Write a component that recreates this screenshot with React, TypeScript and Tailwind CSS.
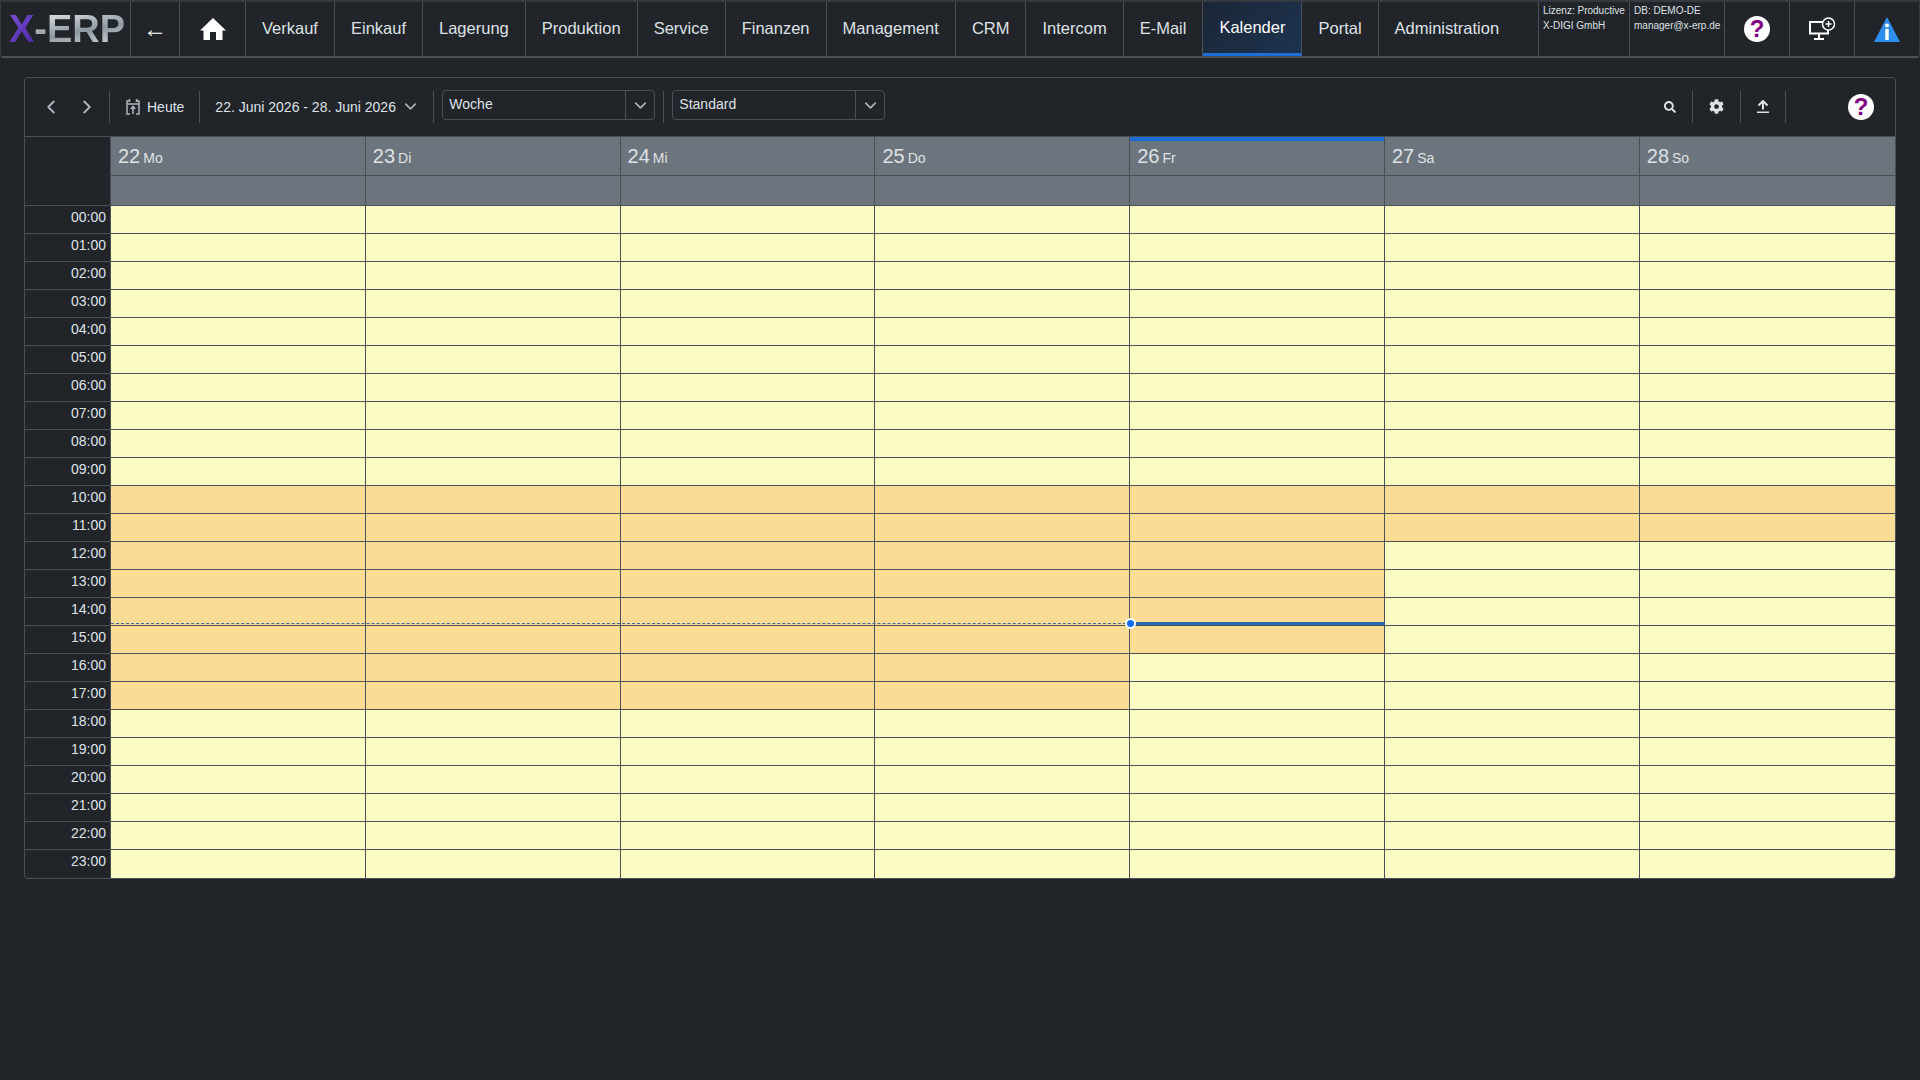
import { ChevronDown, ChevronLeft, ChevronRight } from "lucide-react";
import { FaCog, FaSearch } from "react-icons/fa";

const menuItems = ["Verkauf", "Einkauf", "Lagerung", "Produktion", "Service", "Finanzen", "Management", "CRM", "Intercom", "E-Mail"];

const days = [
  { num: 22, name: "Mo", from: 10, to: 17 },
  { num: 23, name: "Di", from: 10, to: 17 },
  { num: 24, name: "Mi", from: 10, to: 17 },
  { num: 25, name: "Do", from: 10, to: 17 },
  { num: 26, name: "Fr", from: 10, to: 15, today: true },
  { num: 27, name: "Sa", from: 10, to: 11 },
  { num: 28, name: "So", from: 10, to: 11 },
];

const hours = Array.from({ length: 24 }, (_, i) => i);

const pad = (n: number) => String(n).padStart(2, "0");

const HelpBadge = () => (
  <span className="flex h-[26px] w-[26px] items-center justify-center rounded-full bg-white text-[24px] font-bold leading-none text-[#800080]">
    ?
  </span>
);

const HomeIcon = () => (
  <svg width="26" height="24" viewBox="0 0 26 24" fill="#fff">
    <path d="M13 1 L26 13.5 H22.5 V23 H16 V15 H10 V23 H3.5 V13.5 H0 Z" />
  </svg>
);

const MonitorPlusIcon = () => (
  <svg width="28" height="24" viewBox="0 0 28 24" fill="none" stroke="#fff">
    <path d="M17 5 H2 V16.5 H20 V12" strokeWidth="2" />
    <path d="M11 17 V21 M6 22 H16" strokeWidth="2" />
    <circle cx="20.5" cy="7" r="6" strokeWidth="1.5" fill="#212529" />
    <path d="M17.5 7 H23.5 M20.5 4 V10" strokeWidth="1.5" />
  </svg>
);

const InfoTriangle = () => (
  <svg width="26" height="25" viewBox="0 0 26 25">
    <path d="M13 0 L26 25 H0 Z" fill="#2f8fef" />
    <circle cx="13" cy="8.5" r="2" fill="#fff" />
    <rect x="11.3" y="12" width="3.4" height="11" fill="#fff" />
  </svg>
);

const TodayIcon = () => (
  <svg width="14" height="16" viewBox="0 0 14 16" fill="none" stroke="#adb5bd" strokeWidth="1.5">
    <path d="M4 2 H1 V15 H4 M10 2 H13 V15 H10" />
    <path d="M3.5 0 V3 M10.5 0 V3 M1 5 H13" />
    <path d="M7 15 V8 M4.8 10 L7 7.5 L9.2 10" />
  </svg>
);

const UploadIcon = () => (
  <svg width="12" height="13" viewBox="0 0 12 13" fill="none" stroke="#dee2e6" strokeWidth="1.5">
    <path d="M6 9.5 V1.5" strokeWidth="2" />
    <path d="M1.5 5.5 L6 1 L10.5 5.5" strokeWidth="2" />
    <path d="M0 12.2 H12" />
  </svg>
);

const ToolbarDivider = () => <div className="h-8 w-px shrink-0 bg-[#495057]" />;

const SelectBox = ({ label, width }: { label: string; width: string }) => (
  <div className={`mb-[3px] flex h-[30px] items-stretch rounded border border-[#495057] ${width}`}>
    <div className="flex-1 pl-[6px] pt-[3px] text-sm text-[#dee2e6]">{label}</div>
    <div className="flex w-[29px] items-center justify-center border-l border-[#495057]">
      <ChevronDown size={19} className="text-[#adb5bd]" />
    </div>
  </div>
);

const TopNav = () => (
  <nav className="flex h-[58px] items-stretch rounded-b border-x border-y-2 border-x-[#343a40] border-y-[#495057] border-t-[#343a40] text-[16.5px] text-[#dee2e6]">
    <div className="flex w-[130px] shrink-0 items-center border-r border-[#495057] pl-[8px] text-[38px] font-bold leading-none">
      <span className="bg-[linear-gradient(135deg,#7f52dc,#46259e)] bg-clip-text text-transparent">X</span>
      <span className="bg-[linear-gradient(170deg,#eef2f4,#8e98a0_55%,#dfe3e6)] bg-clip-text text-transparent">-ERP</span>
    </div>
    <div className="flex w-[49px] shrink-0 items-center justify-center border-r border-[#495057] text-[24px] text-white">←</div>
    <div className="flex w-[66px] shrink-0 items-center justify-center border-r border-[#495057]">
      <HomeIcon />
    </div>
    {menuItems.map((item) => (
      <div key={item} className="flex shrink-0 items-center border-r border-[#495057] px-4 pb-[2px]">
        {item}
      </div>
    ))}
    <div className="flex shrink-0 items-center border-b-[3px] border-r border-b-[#1b6ed6] border-r-[#495057] bg-[linear-gradient(135deg,#1a2636,#1e3350)] px-4 text-white">
      Kalender
    </div>
    <div className="flex shrink-0 items-center border-r border-[#495057] px-4 pb-[2px]">Portal</div>
    <div className="flex flex-1 items-center border-r border-[#495057] pb-[2px] pl-4">Administration</div>
    <div className="w-[91px] shrink-0 whitespace-nowrap border-r border-[#495057] pl-[4px] pt-px text-[10px] leading-[15px]">
      <div>Lizenz: Productive</div>
      <div>X-DIGI GmbH</div>
    </div>
    <div className="w-[95px] shrink-0 whitespace-nowrap border-r border-[#495057] pl-[4px] pt-px text-[10px] leading-[15px]">
      <div>DB: DEMO-DE</div>
      <div>manager@x-erp.de</div>
    </div>
    <div className="flex w-[65px] shrink-0 items-center justify-center border-r border-[#495057]">
      <HelpBadge />
    </div>
    <div className="flex w-[65px] shrink-0 items-center justify-center border-r border-[#495057]">
      <MonitorPlusIcon />
    </div>
    <div className="flex w-[64px] shrink-0 items-center justify-center">
      <InfoTriangle />
    </div>
  </nav>
);

const Toolbar = () => (
  <div className="flex h-[58px] items-center pb-px pl-[15px] pr-[21px] text-sm text-[#dee2e6]">
    <ChevronLeft size={22} className="mr-[14px] text-[#adb5bd]" />
    <ChevronRight size={22} className="mr-[11px] text-[#adb5bd]" />
    <ToolbarDivider />
    <div className="ml-4 mr-[15px] flex items-center gap-[7px]">
      <TodayIcon />
      <span>Heute</span>
    </div>
    <ToolbarDivider />
    <div className="ml-[15px] flex w-[218px] items-center gap-[5px]">
      <span>22. Juni 2026 - 28. Juni 2026</span>
      <ChevronDown size={19} className="text-[#adb5bd]" />
    </div>
    <ToolbarDivider />
    <div className="ml-2 mr-2">
      <SelectBox label="Woche" width="w-[213px]" />
    </div>
    <ToolbarDivider />
    <div className="ml-2">
      <SelectBox label="Standard" width="w-[213px]" />
    </div>
    <div className="flex-1" />
    <FaSearch size={12} className="mr-[16px] text-[#dee2e6]" />
    <ToolbarDivider />
    <FaCog size={15} className="mx-4 text-[#dee2e6]" />
    <ToolbarDivider />
    <div className="mx-[16px]">
      <UploadIcon />
    </div>
    <ToolbarDivider />
    <div className="ml-[62px]">
      <HelpBadge />
    </div>
  </div>
);

const CalendarHeader = () => (
  <div className="grid grid-cols-[85px_repeat(6,254.8px)_1fr] border-t border-[#495057]">
    <div />
    {days.map((d) => (
      <div key={d.num} className="border-l border-[#495057] bg-[#6c757d] text-[#dee2e6]">
        <div className={`h-[39px] border-b border-[#495057] pl-[7px] ${d.today ? "border-t-[4px] border-t-[#1b6ed6] pt-[3px]" : "pt-[7px]"}`}>
          <span className="text-[20px] leading-6">{d.num}</span>
          <span className="ml-[3px] text-sm">{d.name}</span>
        </div>
        <div className="h-[29px]" />
      </div>
    ))}
  </div>
);

const CalendarBody = () => (
  <div className="relative">
    {hours.map((h) => (
      <div
        key={h}
        className={`grid grid-cols-[85px_repeat(6,254.8px)_1fr] border-t border-[#495057] ${h === 23 ? "h-[29px]" : "h-[28px]"}`}
      >
        <div className="pr-[4px] pt-[2px] text-right text-sm leading-[18px] text-[#dee2e6]">{pad(h)}:00</div>
        {days.map((d) => (
          <div
            key={d.num}
            className={`border-l border-[#495057] ${h >= d.from && h <= d.to ? "bg-[#fadc95]" : "bg-[#fbfcc4]"}`}
          />
        ))}
      </div>
    ))}
    {/* now indicator */}
    <div className="absolute left-[86px] top-[418px] h-0 w-[1020px] border-t border-dashed border-[#3d6a9e]" />
    <div className="absolute left-[1105px] top-[417px] h-[3px] w-[255px] bg-[#2a69b3]" />
    <div className="absolute left-[1100px] top-[413px] h-[11px] w-[11px] rounded-full border-2 border-white bg-[#0d6efd]" />
  </div>
);

export default function App() {
  return (
    <div className="min-h-screen bg-[#212529] font-['Liberation_Sans',Arial,sans-serif]">
      <TopNav />
      <main className="px-[24px] pt-[19px]">
        <div className="overflow-hidden rounded border border-[#495057]">
          <Toolbar />
          <CalendarHeader />
          <CalendarBody />
        </div>
      </main>
    </div>
  );
}
